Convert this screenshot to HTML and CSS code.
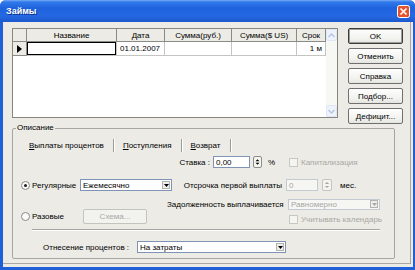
FILE: index.html
```html
<!DOCTYPE html>
<html lang="ru">
<head>
    <meta charset="UTF-8">
    <meta name="viewport" content="width=device-width, initial-scale=1.0">
    <title>Займы</title>
    <link rel="stylesheet" href="styles.css">
</head>
<body>
    <div class="window">
        <div class="titlebar">
            <span class="title">Займы</span>
            <span class="close-btn">
                <svg width="13" height="13" viewBox="0 0 13 13">
                    <rect x="0.5" y="0.5" width="12" height="12" rx="2" fill="#e2552f" stroke="#fff"/>
                    <path d="M3.5 3.5 L9.5 9.5 M9.5 3.5 L3.5 9.5" stroke="#fff" stroke-width="1.6"/>
                </svg>
            </span>
        </div>

        <div class="client">
            <div class="frame">
                <div class="top-area">
                    <div class="grid">
                        <table class="loans">
                            <thead>
                                <tr>
                                    <th class="col-ind"></th>
                                    <th class="col-name">Название</th>
                                    <th class="col-date">Дата</th>
                                    <th class="col-rub">Сумма(руб.)</th>
                                    <th class="col-usd">Сумма($ US)</th>
                                    <th class="col-term">Срок</th>
                                </tr>
                            </thead>
                            <tbody>
                                <tr>
                                    <td class="col-ind">
                                        <svg width="5" height="8" viewBox="0 0 5 8"><path d="M0 0 L5 4 L0 8Z" fill="#000"/></svg>
                                    </td>
                                    <td class="focus"></td>
                                    <td>01.01.2007</td>
                                    <td></td>
                                    <td></td>
                                    <td class="num">1 м</td>
                                </tr>
                            </tbody>
                        </table>
                        <div class="vscroll">
                            <div class="sb-btn">
                                <svg width="7" height="5" viewBox="0 0 7 5"><path d="M0.5 4 L3.5 1 L6.5 4" fill="none" stroke="#b4c4e4" stroke-width="1.4"/></svg>
                            </div>
                            <div class="sb-track"></div>
                            <div class="sb-btn">
                                <svg width="7" height="5" viewBox="0 0 7 5"><path d="M0.5 1 L3.5 4 L6.5 1" fill="none" stroke="#b4c4e4" stroke-width="1.4"/></svg>
                            </div>
                        </div>
                    </div>

                    <div class="buttons">
                        <div class="btn btn-default">OK</div>
                        <div class="btn">Отменить</div>
                        <div class="btn">Справка</div>
                        <div class="btn">Подбор...</div>
                        <div class="btn">Дефицит...</div>
                    </div>
                </div>

                <fieldset class="group">
                    <legend>Описание</legend>
                    <div class="tabs">
                        <span class="tab"><u>В</u>ыплаты процентов</span>
                        <span class="tab"><u>П</u>оступления</span>
                        <span class="tab"><u>В</u>озврат</span>
                    </div>

                    <div class="row row-rate">
                        <span class="lbl lbl-rate">Ставка :</span>
                        <span class="edit edit-rate">0,00</span>
                        <span class="spin">
                            <svg width="9" height="12" viewBox="0 0 9 12"><path d="M2 5 L4.5 2.5 L7 5Z M2 7 L4.5 9.5 L7 7Z" fill="#000"/></svg>
                        </span>
                        <span class="lbl lbl-pct">%</span>
                        <span class="check disabled"></span>
                        <span class="lbl lbl-off">Капитализация</span>
                    </div>

                    <div class="row row-regular">
                        <span class="radio checked"></span>
                        <span class="lbl lbl-regular">Регулярные</span>
                        <span class="combo combo-period">
                            <span class="combo-text">Ежемесячно</span>
                            <span class="combo-btn">
                                <svg width="5" height="3" viewBox="0 0 5 3"><path d="M0 0 L5 0 L2.5 3Z" fill="#000"/></svg>
                            </span>
                        </span>
                        <span class="lbl lbl-delay">Отсрочка первой выплаты</span>
                        <span class="edit edit-delay disabled">0</span>
                        <span class="spin spin-delay">
                            <svg width="9" height="12" viewBox="0 0 9 12"><path d="M2 5 L4.5 2.5 L7 5Z M2 7 L4.5 9.5 L7 7Z" fill="#a8a8a8"/></svg>
                        </span>
                        <span class="lbl lbl-months">мес.</span>
                    </div>

                    <div class="row-pair">
                        <div class="row row-once">
                            <span class="radio"></span>
                            <span class="lbl lbl-once">Разовые</span>
                            <span class="btn btn-small disabled">Схема...</span>
                        </div>
                        <div class="debt">
                            <div class="row">
                                <span class="lbl lbl-debt">Задолженность выплачивается</span>
                                <span class="combo combo-debt disabled">
                                    <span class="combo-text">Равномерно</span>
                                    <span class="combo-btn">
                                        <svg width="5" height="3" viewBox="0 0 5 3"><path d="M0 0 L5 0 L2.5 3Z" fill="#a8a8a8"/></svg>
                                    </span>
                                </span>
                            </div>
                            <div class="row row-calendar">
                                <span class="check disabled"></span>
                                <span class="lbl lbl-off">Учитывать календарь</span>
                            </div>
                        </div>
                    </div>

                    <div class="separator"></div>

                    <div class="row row-assign">
                        <span class="lbl lbl-assign">Отнесение процентов :</span>
                        <span class="combo combo-assign">
                            <span class="combo-text">На затраты</span>
                            <span class="combo-btn">
                                <svg width="5" height="3" viewBox="0 0 5 3"><path d="M0 0 L5 0 L2.5 3Z" fill="#000"/></svg>
                            </span>
                        </span>
                    </div>
                </fieldset>
            </div>
        </div>
    </div>
</body>
</html>
```

FILE: styles.css
```css
:root {
    --color-face: #ecebe6;
    --color-frame: #1f5fd8;
    --color-line: #a6a6a0;
    --color-edit: #7f94b4;
    --color-disabled: #a8a8a4;
}

* {
    box-sizing: border-box;
}

body {
    margin: 0;
    font-family: "Liberation Sans", Arial, sans-serif;
    font-size: 8px;
    color: #000;
    background: #fff;
}

.window {
    width: 415px;
    height: 270px;
    display: flex;
    flex-direction: column;
    background: var(--color-frame);
    border-radius: 6px 6px 0 0;
    padding: 0 2px 3px 3px;
    overflow: hidden;
}

/* title bar */

.titlebar {
    height: 22px;
    flex: none;
    margin: 0 -2px 0 -3px;
    padding: 0 5px 0 6px;
    display: flex;
    align-items: center;
    justify-content: space-between;
    background: linear-gradient(to bottom, #78adf7 0, #3079ea 2px, #1e63dd 8px, #2468e2 16px, #1b58cc 22px);
}

.title {
    color: #fff;
    font-weight: bold;
    font-size: 9px;
    text-shadow: 1px 1px 0 #0b2f8a;
}

.close-btn {
    display: flex;
}

/* client area: raised panel, only its dark edges show */

.client {
    flex: 1;
    background: var(--color-face);
    padding: 0 2px 3px 0;
    display: flex;
}

.frame {
    flex: 1;
    padding: 6px 0 0 9px;
    border-right: 1px solid #a8a8a2;
    border-bottom: 1px solid #a8a8a2;
    display: flex;
    flex-direction: column;
}

.top-area {
    height: 90px;
    flex: none;
    display: flex;
    gap: 10px;
}

.grid {
    width: 326px;
    height: 90px;
    display: flex;
    border: 1px solid #86867f;
    background: #fff;
}

.loans {
    width: 313px;
    table-layout: fixed;
    border-collapse: separate;
    border-spacing: 0;
    align-self: flex-start;
}

.loans th,
.loans td {
    box-sizing: border-box;
    padding: 0 3px;
    white-space: nowrap;
    overflow: hidden;
    font-weight: normal;
}

.loans th {
    height: 13px;
    background: var(--color-face);
    border-right: 1px solid #8a8a86;
    border-bottom: 1px solid #8a8a86;
    text-align: center;
}

.loans td {
    height: 14px;
    border-right: 1px solid #c4c4c0;
    border-bottom: 1px solid #c4c4c0;
}

.loans .col-ind { width: 14px; padding: 0; }
.loans .col-name { width: 90px; }
.loans .col-date { width: 48px; }
.loans .col-rub { width: 67px; }
.loans .col-usd { width: 65px; }
.loans .col-term { width: 29px; }

.loans td.col-ind {
    background: var(--color-face);
    border-right-color: #8a8a86;
    border-bottom-color: #8a8a86;
    text-align: center;
}

.loans td.col-ind svg {
    display: block;
    margin: 0 auto;
}

.loans td.focus {
    box-shadow: inset 0 0 0 1px #000;
}

.loans td.num {
    text-align: right;
}

.vscroll {
    width: 11px;
    margin-left: auto;
    display: flex;
    flex-direction: column;
    background: #f7f7f4;
}

.sb-btn {
    height: 12px;
    display: flex;
    align-items: center;
    justify-content: center;
    background: #eef2fb;
    border: 1px solid #dfe6f4;
    border-radius: 2px;
}

.sb-track {
    flex: 1;
}

/* dialog buttons */

.buttons {
    width: 55px;
    display: flex;
    flex-direction: column;
    gap: 4px;
}

.btn {
    height: 16px;
    flex: none;
    display: flex;
    align-items: center;
    justify-content: center;
    border: 1px solid #707070;
    border-radius: 2px;
    background: linear-gradient(to bottom, #fefefe, #f1f1ee 70%, #e4e4df);
}

.btn-default {
    box-shadow: inset 0 0 0 1px #9c9c98;
    border-color: #3c3c3c;
}

.btn.disabled {
    color: var(--color-disabled);
    border-color: #c4c4be;
    background: #f2f2ee;
}

/* group box */

.group {
    width: 383px;
    margin: 5px 0 4px 0;
    padding: 0;
    flex: 1;
    border: 1px solid var(--color-line);
    border-radius: 2px;
    display: flex;
    flex-direction: column;
}

.group legend {
    margin-left: 3px;
    padding: 0 1px;
    line-height: 10px;
}

.tabs {
    display: flex;
    height: 14px;
    margin: 5px 0 0 7px;
    align-items: center;
}

.tab {
    padding: 0 9px;
    line-height: 13px;
    border-right: 1px solid #9c9c96;
    box-shadow: 1px 0 0 #fff;
}

.row {
    display: flex;
    align-items: center;
    height: 12px;
}

.lbl {
    white-space: nowrap;
}

.lbl-off {
    color: var(--color-disabled);
    margin-left: 3px;
}

.row-rate {
    margin-top: 4px;
}

.lbl-rate {
    width: 197px;
    text-align: right;
}

.edit {
    height: 12px;
    display: flex;
    align-items: center;
    padding-left: 2px;
    border: 1px solid var(--color-edit);
    background: #fff;
}

.edit.disabled {
    color: var(--color-disabled);
    background: #f6f6f3;
    border-color: #c4cad4;
}

.edit-rate {
    width: 37px;
    margin-left: 3px;
}

.spin {
    width: 9px;
    height: 12px;
    margin-left: 3px;
    border: 1px solid #8c8c88;
    border-radius: 2px;
    background: #f4f4f1;
    display: flex;
    align-items: center;
    justify-content: center;
}

.spin svg {
    display: block;
}

.spin-delay {
    width: 10px;
    margin-left: 4px;
    border-color: #c4c4be;
}

.lbl-pct {
    width: 6px;
    margin-left: 6px;
}

.check {
    width: 9px;
    height: 9px;
    border: 1px solid #1c5180;
    background: #fff;
}

.check.disabled {
    border-color: #c8c8c2;
    background: #f4f4f1;
}

.row-rate .check {
    margin-left: 15px;
}

.radio {
    width: 9px;
    height: 9px;
    margin-left: 8px;
    border: 1px solid #8a8a86;
    border-radius: 50%;
    background: #fafafa;
    display: flex;
    align-items: center;
    justify-content: center;
}

.radio.checked::after {
    content: "";
    width: 3px;
    height: 3px;
    border-radius: 50%;
    background: #222;
}

.row-regular {
    margin-top: 11px;
}

.lbl-regular {
    width: 45px;
    margin-left: 2px;
}

.combo {
    height: 12px;
    display: flex;
    align-items: center;
    border: 1px solid var(--color-edit);
    background: #fff;
    padding: 0 1px 0 2px;
}

.combo-text {
    flex: 1;
}

.combo-btn {
    width: 8px;
    height: 8px;
    display: flex;
    align-items: center;
    justify-content: center;
    background: #eeeeea;
    border: 1px solid #b4b4ae;
}

.combo.disabled {
    color: var(--color-disabled);
    background: #f6f6f3;
    border-color: #c4cad4;
}

.combo-period {
    width: 92px;
    margin-left: 3px;
}

.lbl-delay {
    width: 99px;
    margin-left: 11px;
    text-align: right;
}

.edit-delay {
    width: 32px;
    margin-left: 4px;
}

.lbl-months {
    margin-left: 8px;
}

.row-pair {
    display: flex;
    margin-top: 7px;
}

.row-once {
    width: 154px;
    height: 15px;
    align-self: flex-end;
}

.lbl-once {
    width: 51px;
    margin-left: 2px;
}

.btn-small {
    width: 64px;
    height: 15px;
}

.debt {
    display: flex;
    flex-direction: column;
}

.lbl-debt {
    width: 115px;
    text-align: right;
}

.combo-debt {
    width: 92px;
    height: 11px;
    margin-left: 6px;
}

.row-calendar {
    margin-top: 4px;
    padding-left: 122px;
    height: 10px;
}

.separator {
    margin: 5px 0 0 19px;
    width: 348px;
    border-top: 1px solid #a6a6a0;
    border-bottom: 1px solid #fff;
}

.row-assign {
    margin-top: 10px;
}

.lbl-assign {
    width: 85px;
    margin-left: 30px;
}

.combo-assign {
    width: 149px;
    margin-left: 9px;
}
```
